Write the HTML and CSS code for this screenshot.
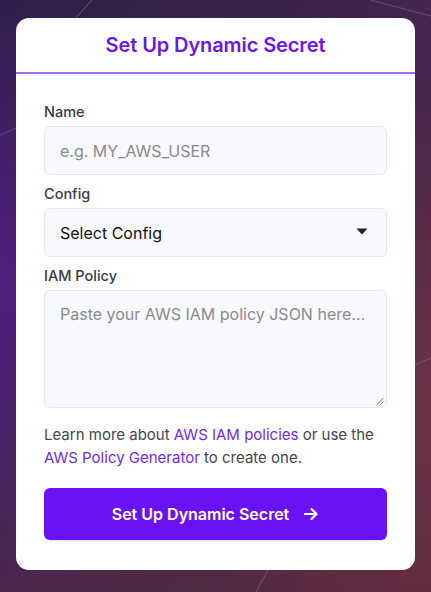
FILE: index.html
```html
<!DOCTYPE html>
<html>
<head>
<meta charset="utf-8">
<link rel="stylesheet" href="styles.css">
</head>
<body>
<div class="bg">
  <svg class="lines" width="431" height="592" viewBox="0 0 431 592">
    <path d="M92 0 L72 22" stroke="rgba(255,255,255,0.25)" stroke-width="1" fill="none"/>
    <path d="M370 0 L431 16" stroke="rgba(255,255,255,0.18)" stroke-width="1.2" fill="none"/>
    <path d="M0 135 L16 128" stroke="rgba(255,255,255,0.18)" stroke-width="1" fill="none"/>
    <path d="M415 365 L431 358" stroke="rgba(255,255,255,0.15)" stroke-width="1" fill="none"/>
    <path d="M268 570 L256 592" stroke="rgba(255,255,255,0.2)" stroke-width="1" fill="none"/>
  </svg>
  <div class="card">
    <div class="card-header">
      <h1 class="title">Set Up Dynamic Secret</h1>
    </div>
    <div class="card-body">
      <div class="field">
        <label class="label">Name</label>
        <div class="input placeholder">e.g. MY_AWS_USER</div>
      </div>
      <div class="field">
        <label class="label">Config</label>
        <div class="input select">
          <span>Select Config</span>
          <svg class="caret" width="12" height="7" viewBox="0 0 12 7"><path d="M0.5 0.5 H11.5 L6 6.5 Z" fill="#1f1f26"/></svg>
        </div>
      </div>
      <div class="field">
        <label class="label">IAM Policy</label>
        <div class="input textarea placeholder">
          Paste your AWS IAM policy JSON here...
          <svg class="grip" width="8" height="8" viewBox="0 0 8 8"><path d="M7.5 1 L1 7.5 M7.5 4.5 L4.5 7.5" stroke="#777" stroke-width="1" fill="none"/></svg>
        </div>
      </div>
      <p class="help">Learn more about <a class="link">AWS IAM policies</a> or use the <a class="link">AWS Policy Generator</a> to create one.</p>
      <button class="btn">
        <span>Set Up Dynamic Secret</span>
        <svg width="16" height="16" viewBox="0 0 16 16"><path d="M2 8 H13.5 M8.5 3 L13.5 8 L8.5 13" stroke="#fff" stroke-width="2.2" fill="none" stroke-linecap="round" stroke-linejoin="round"/></svg>
      </button>
    </div>
  </div>
</div>
</body>
</html>
```
FILE: styles.css
```css
* { box-sizing: border-box; }
html, body { margin: 0; padding: 0; }
body {
  font-family: Inter, "Noto Sans", sans-serif;
  width: 431px;
  height: 592px;
  overflow: hidden;
}
.bg {
  position: relative;
  width: 431px;
  height: 592px;
  padding: 18px 16px 0 16px;
  background:
    radial-gradient(ellipse 300px 420px at 0% 48%, rgba(80, 30, 130, 0.95), rgba(80, 30, 130, 0) 72%),
    radial-gradient(ellipse 320px 420px at 100% 70%, rgba(112, 50, 72, 0.9), rgba(112, 50, 72, 0) 75%),
    linear-gradient(135deg, #2d1e48 0%, #45264f 45%, #5a2a3c 100%);
}
.lines { position: absolute; left: 0; top: 0; }
.card {
  position: relative;
  width: 399px;
  height: 552px;
  background: #ffffff;
  border-radius: 13px;
  display: flex;
  flex-direction: column;
}
.card-header {
  height: 56px;
  border-bottom: 2px solid #9d6ef2;
  display: flex;
  align-items: center;
  justify-content: center;
}
.title {
  margin: 0;
  font-size: 20px;
  font-weight: 600;
  color: #6a17ee;
  letter-spacing: -0.1px;
}
.card-body {
  padding: 29px 28px 0 28px;
  display: flex;
  flex-direction: column;
}
.field {
  display: flex;
  flex-direction: column;
  margin-bottom: 10px;
}
.label {
  font-size: 14.5px;
  font-weight: 500;
  color: #3a3a44;
  line-height: 18px;
  margin-bottom: 5px;
}
.input {
  height: 49px;
  background: #f8f9fe;
  border: 1px solid #e5e8f6;
  border-radius: 6px;
  padding: 0 15px;
  font-size: 16px;
  display: flex;
  align-items: center;
  color: #111;
}
.placeholder { color: #8a8a90; }
.select { justify-content: space-between; padding-right: 18px; }
.caret { margin-top: -2px; }
.textarea {
  position: relative;
  height: 118px;
  align-items: flex-start;
  padding-top: 13px;
  line-height: 20px;
}
.grip { position: absolute; right: 2px; bottom: 2px; }
.help {
  margin: 5px 0 0 0;
  font-size: 15px;
  line-height: 23px;
  color: #45454d;
}
.link { color: #7229f2; text-decoration: none; }
.btn {
  margin-top: 19px;
  height: 52px;
  border: none;
  border-radius: 6px;
  background: #6b12f5;
  color: #fff;
  font-family: Inter, sans-serif;
  font-size: 16px;
  font-weight: 600;
  display: flex;
  align-items: center;
  justify-content: center;
  gap: 14px;
  box-shadow: 0 1px 2px rgba(0,0,0,0.12);
}
```
